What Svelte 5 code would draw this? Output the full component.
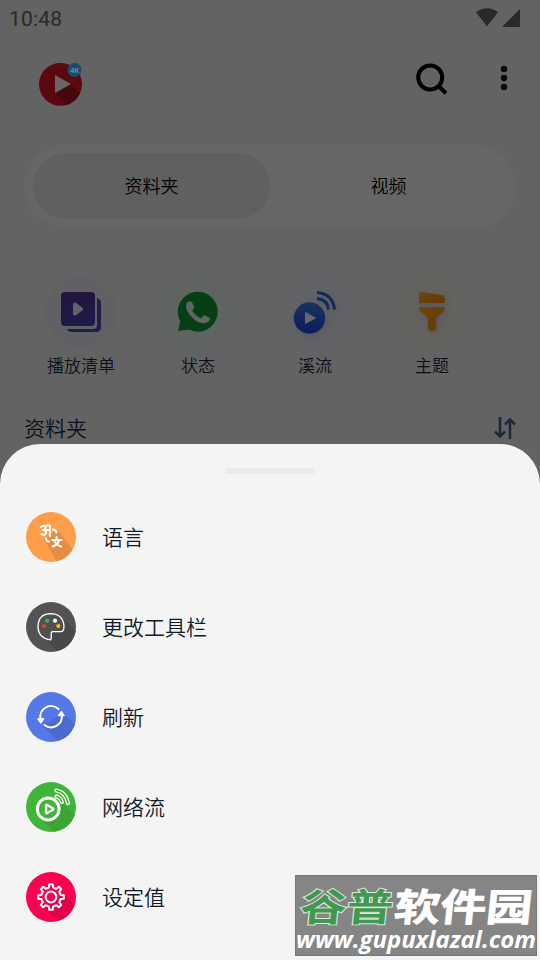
<script>
    let time = $state("10:48");
    let activeTab = $state("资料夹");

    const tabs = ["资料夹", "视频"];
    const shortcuts = [
        { id: "playlist", label: "播放清单" },
        { id: "status", label: "状态" },
        { id: "stream", label: "溪流" },
        { id: "theme", label: "主题" },
    ];
    const menu = [
        { id: "language", label: "语言" },
        { id: "toolbar", label: "更改工具栏" },
        { id: "refresh", label: "刷新" },
        { id: "network", label: "网络流" },
        { id: "settings", label: "设定值" },
    ];
    const teeth = [0, 45, 90, 135, 180, 225, 270, 315];
</script>

<div class="screen">
    <div class="status-bar">
        <span>{time}</span>
        <svg width="46" height="20" viewBox="0 0 46 20">
            <path d="M1 4.3Q12 -3.7 23 4.3L12 18.2Z" />
            <path d="M45 1V19H27Z" />
        </svg>
    </div>

    <header>
        <svg class="logo" width="44" height="44" viewBox="0 0 44 44">
            <defs>
                <linearGradient id="red" x1="0" y1="0" x2="0" y2="1">
                    <stop offset="0" stop-color="#620d13" />
                    <stop offset=".15" stop-color="#5a080e" />
                    <stop offset="1" stop-color="#5d080e" />
                </linearGradient>
                <clipPath id="logo-clip"><circle cx="21.5" cy="22.3" r="21.5" /></clipPath>
            </defs>
            <circle cx="21.5" cy="22.3" r="21.5" fill="url(#red)" />
            <path d="M16 31L32 22L44 35L32 48Z" fill="#42090f" clip-path="url(#logo-clip)" />
            <path d="M16 13L32 22L16 31Z" fill="#666" />
            <circle cx="35.5" cy="8" r="7" fill="#174e6d" />
            <text x="35.5" y="10.6" text-anchor="middle" font-size="7.5" font-weight="700" fill="#75838b">4K</text>
        </svg>
        <div class="actions">
            <svg width="34" height="34" viewBox="0 0 34 34" fill="none" stroke="#000" stroke-width="4">
                <circle cx="15.2" cy="15.5" r="12" />
                <path d="M24 24.5L31 31.2" />
            </svg>
            <svg width="8" height="26" viewBox="0 0 8 26" fill="#060a10">
                <circle cx="4" cy="4" r="3.2" />
                <circle cx="4" cy="13" r="3.2" />
                <circle cx="4" cy="22" r="3.2" />
            </svg>
        </div>
    </header>

    <nav class="tabs">
        {#each tabs as tab}
            <button class:active={tab === activeTab} onclick={() => (activeTab = tab)}>{tab}</button>
        {/each}
    </nav>

    <div class="shortcuts">
        {#each shortcuts as item}
            <div class="shortcut">
                <div class="bubble {item.id}">
                    <svg width="72" height="72" viewBox="0 0 72 72">
                        {#if item.id === "playlist"}
                            <defs>
                                <linearGradient id="purple" x1="0" y1="0" x2="0" y2="1">
                                    <stop offset="0" stop-color="#24143f" />
                                    <stop offset="1" stop-color="#1c1c49" />
                                </linearGradient>
                            </defs>
                            <rect x="16" y="16" width="34" height="34" rx="4" fill="url(#purple)" />
                            <path d="M52 22Q56 23 56 27V51Q56 56 51 56H27Q23 56 22 53H48Q52 53 52 49Z" fill="#20204c" />
                            <path d="M30 28.5L36 33L30 37.5Z" fill="#646467" stroke="#646467" stroke-width="4" stroke-linejoin="round" />
                        {:else if item.id === "status"}
                            <path
                                d="M16 55L18.3 45.5A20 20 0 1 1 26.8 53.6Z"
                                fill="#063f16"
                            />
                            <path
                                d="M24.5 27.5Q26 25 28.5 25.2Q30 25.4 32.3 31.3Q32.6 32.2 30.2 34.8Q33.5 40.2 39 42.4Q41.8 39.2 42.6 39.2L48 42Q48.3 46 43.5 47Q36.5 48.5 29.7 41Q22.5 33.5 24.5 27.5Z"
                                fill="#626562"
                            />
                        {:else if item.id === "stream"}
                            <defs>
                                <linearGradient id="blue" x1="0" y1="0" x2="0" y2="1">
                                    <stop offset="0" stop-color="#1c315f" />
                                    <stop offset="1" stop-color="#091d59" />
                                </linearGradient>
                            </defs>
                            <circle cx="30.5" cy="42" r="15.7" fill="url(#blue)" />
                            <path d="M26.5 36.5V47.5L36.5 42Z" fill="#646669" stroke="#646669" stroke-linejoin="round" />
                            <path d="M38 22.5Q48.5 23.5 49.5 33.5M38 16.5Q54 18 55.5 33.5" fill="none" stroke="#13285b" stroke-width="3" />
                        {:else}
                            <defs>
                                <linearGradient id="amber" x1="0" y1="0" x2="1" y2="1">
                                    <stop offset="0" stop-color="#6b4812" />
                                    <stop offset="1" stop-color="#633907" />
                                </linearGradient>
                            </defs>
                            <path d="M23 27V18Q23 16 25 16L46 19Q48.7 19.5 48.7 22V27Z" fill="url(#amber)" />
                            <path d="M23 31H48.7V33Q48.7 35 47 36L40.3 42V51Q40.3 55 36 55Q31.7 55 31.7 51V42L25 36Q23 35 23 33Z" fill="url(#amber)" />
                        {/if}
                    </svg>
                </div>
                <span>{item.label}</span>
            </div>
        {/each}
    </div>

    <div class="section-title">
        <h2>资料夹</h2>
        <svg width="22" height="22" viewBox="0 0 22 22" fill="none" stroke="#1a2a3e" stroke-width="2.5">
            <path d="M6 0V19M1 14.5L6 19.5L11 14.5M16 22V3M11 7.5L16 2.5L21 7.5" />
        </svg>
    </div>

    <div class="sheet">
        <div class="handle"></div>
        <ul>
            {#each menu as item}
                <li>
                    <svg width="50" height="50" viewBox="0 0 50 50">
                        <clipPath id="round-{item.id}"><circle cx="25" cy="25" r="25" /></clipPath>
                        <g clip-path="url(#round-{item.id})" fill="none" stroke-linecap="round" stroke-linejoin="round">
                            {#if item.id === "language"}
                                <rect width="50" height="50" fill="#ff9d48" />
                                <path d="M18 27L32 18L50 42V50H31Z" fill="#e28e44" />
                                <g stroke="#fff" stroke-width="2">
                                    <path d="M15 15Q18 12.5 19.5 15Q20 17.5 17 18Q20.5 18 20 21Q19 24 15 22M20 18H24M21 13.5H24M24 13.5V24" />
                                    <path d="M27 17.5Q30 17.5 30.5 20.5M20 26.5Q20 29.3 23 29.5" />
                                    <path d="M30.5 25V27M26 28H35.5M33 28Q32 33 26.5 34.5M28 28Q30 33 35 34.5" />
                                </g>
                            {:else if item.id === "toolbar"}
                                <rect width="50" height="50" fill="#535353" />
                                <path d="M16 34L37 17L50 29V50H32Z" fill="#494949" />
                                <path
                                    d="M25.3 30.5Q25.5 29.7 27 29.7H35Q38 29.7 38 24Q37 12 24.7 11.7Q12 12 12 25Q12.5 36 23.5 37.7Q25.2 38 25.2 36Z"
                                    stroke="#fff"
                                    stroke-width="1.3"
                                    fill="#505050"
                                />
                                <circle cx="18" cy="24" r="2.1" fill="#ee3e39" />
                                <circle cx="21.2" cy="18.7" r="2.1" fill="#45af50" />
                                <circle cx="29" cy="18.7" r="2.1" fill="#f8f8f8" />
                                <circle cx="32.3" cy="24" r="2.1" fill="#fbbc0a" />
                            {:else if item.id === "refresh"}
                                <rect width="50" height="50" fill="#5578e8" />
                                <path d="M17 34L37 21L50 33V50H33Z" fill="#4b6bd0" />
                                <path d="M14.5 27A10.8 10.8 0 0 1 32.5 17M35.8 23A10.8 10.8 0 0 1 18.5 33" stroke="#fff" stroke-width="2" />
                                <path d="M11.8 26.8L14.7 31L17.7 26.8ZM32.5 23.5L35.5 19.5L38.2 23.5Z" fill="#fff" stroke="#fff" stroke-width="1.3" />
                            {:else if item.id === "network"}
                                <rect width="50" height="50" fill="#40b638" />
                                <path d="M14 36L34 19L50 34V50H28Z" fill="#3ba433" />
                                <circle cx="22.2" cy="27" r="10.9" fill="#40b638" stroke="#fff" stroke-width="3" />
                                <path d="M20 23.5Q20 22.3 21.2 23L27 26.4Q28 27 27 27.7L21.2 31Q20 31.7 20 30.5Z" stroke="#fff" stroke-width="2.3" />
                                <g stroke="#fff" stroke-width="4.2">
                                    <path d="M30.5 8.5Q40 10.5 42 21M30.5 14.5Q34.5 15.5 35.8 20" />
                                </g>
                                <path d="M30.5 8.5Q40 10.5 42 21M30.5 14.5Q34.5 15.5 35.8 20" stroke="#40b638" stroke-width="1.5" />
                            {:else}
                                <rect width="50" height="50" fill="#ff0051" />
                                <path d="M17 35L37 22L50 34V50H33Z" fill="#e2004b" />
                                <g transform="translate(25 25)">
                                    {#each teeth as angle}
                                        <path
                                            transform="rotate({angle})"
                                            d="M-3.7 -8.9L-2.1 -9.6L-1.7 -12.8H1.7L2.1 -9.6L3.7 -8.9"
                                            stroke="#fff"
                                            stroke-width="2"
                                        />
                                    {/each}
                                    <circle r="5.4" stroke="#fff" stroke-width="2" />
                                </g>
                            {/if}
                        </g>
                    </svg>
                    <span>{item.label}</span>
                </li>
            {/each}
        </ul>
    </div>

    <div class="watermark">
        <svg width="242" height="81" viewBox="0 0 242 81">
            <g transform="translate(0 46) skewX(-6)" class="brand">
                <text x="4" y="0" textLength="93" lengthAdjust="spacingAndGlyphs" class="green">谷普</text>
                <text x="98" y="0" textLength="138" lengthAdjust="spacingAndGlyphs" class="white">软件园</text>
            </g>
            <text x="1" y="73" textLength="240" lengthAdjust="spacingAndGlyphs" class="url">www.gupuxlazal.com</text>
        </svg>
    </div>
</div>

<style>
    :global(body) {
        margin: 0;
        background: #636363;
    }

    .screen {
        position: relative;
        display: flex;
        flex-direction: column;
        width: 540px;
        height: 960px;
        overflow: hidden;
        background: #636363;
        color: #0a101b;
        font-family: Roboto, "Noto Sans CJK SC", sans-serif;
        font-weight: 350;
    }

    svg {
        display: block;
        flex-shrink: 0;
    }

    .status-bar {
        display: flex;
        justify-content: space-between;
        align-items: center;
        height: 36px;
        padding: 0 19px 0 9px;
        color: #292929;
        fill: #292929;
        font-size: 21px;
        font-weight: 450;
        letter-spacing: 0.2px;
    }

    .status-bar span {
        padding-top: 2px;
    }

    header {
        display: flex;
        justify-content: space-between;
        height: 108px;
        padding: 26px 32px 0 39px;
        box-sizing: border-box;
    }

    .actions {
        display: flex;
        gap: 51px;
    }

    .actions svg:last-child {
        margin-top: 3px;
    }

    .tabs {
        display: flex;
        height: 84px;
        margin: 0 24px;
        padding: 9px;
        box-sizing: border-box;
        border-radius: 42px;
        background: #666;
    }

    .tabs button {
        flex: 1;
        padding: 0 0 2px;
        border: none;
        border-radius: 33px;
        background: none;
        color: #000;
        font: inherit;
        font-size: 18px;
    }

    .tabs .active {
        background: #606060;
    }

    .shortcuts {
        display: flex;
        margin: 48px 49px 0 22.5px;
    }

    .shortcut {
        display: flex;
        flex-direction: column;
        align-items: center;
        gap: 5px;
        width: 117px;
        font-size: 17px;
        line-height: 26px;
    }

    .bubble {
        border-radius: 50%;
    }

    .playlist {
        background: #616165;
    }

    .status {
        background: #606461;
    }

    .stream {
        background: #606266;
    }

    .theme {
        background: #64625e;
    }

    .stream svg,
    .theme svg {
        filter: drop-shadow(2px 3px 3px #00000018);
    }

    .section-title {
        display: flex;
        justify-content: space-between;
        align-items: center;
        height: 30px;
        margin: 34px 24px 0;
    }

    h2 {
        margin: 0;
        padding-bottom: 2px;
        font-size: 21px;
        font-weight: inherit;
    }

    .sheet {
        position: absolute;
        inset: 444px 0 0;
        border-radius: 40px 40px 0 0;
        background: #f4f4f4;
        color: #121b2b;
    }

    .handle {
        width: 90px;
        height: 6px;
        margin: 24px auto 18px;
        border-radius: 3px;
        background: #eaebef;
    }

    ul {
        margin: 0;
        padding: 0 26px;
        list-style: none;
    }

    li {
        display: flex;
        align-items: center;
        gap: 26px;
        height: 90px;
        font-size: 21px;
    }

    li span {
        padding-bottom: 2px;
    }

    .watermark {
        position: absolute;
        top: 875px;
        left: 295px;
        width: 242px;
        height: 81px;
        background: #858585;
        box-shadow: inset 0 0 0 1px #777;
    }

    .brand {
        font-family: "Noto Sans CJK SC", sans-serif;
        font-size: 38px;
        font-weight: 700;
    }

    .green {
        fill: #419950;
        stroke: #dce8dd;
        stroke-width: 2px;
        paint-order: stroke;
    }

    .white {
        fill: #fff;
        stroke: #fff;
        stroke-width: 0.8px;
    }

    .url {
        fill: #fff;
        font-family: "Open Sans", sans-serif;
        font-size: 23px;
        font-style: italic;
        font-weight: 700;
    }
</style>
